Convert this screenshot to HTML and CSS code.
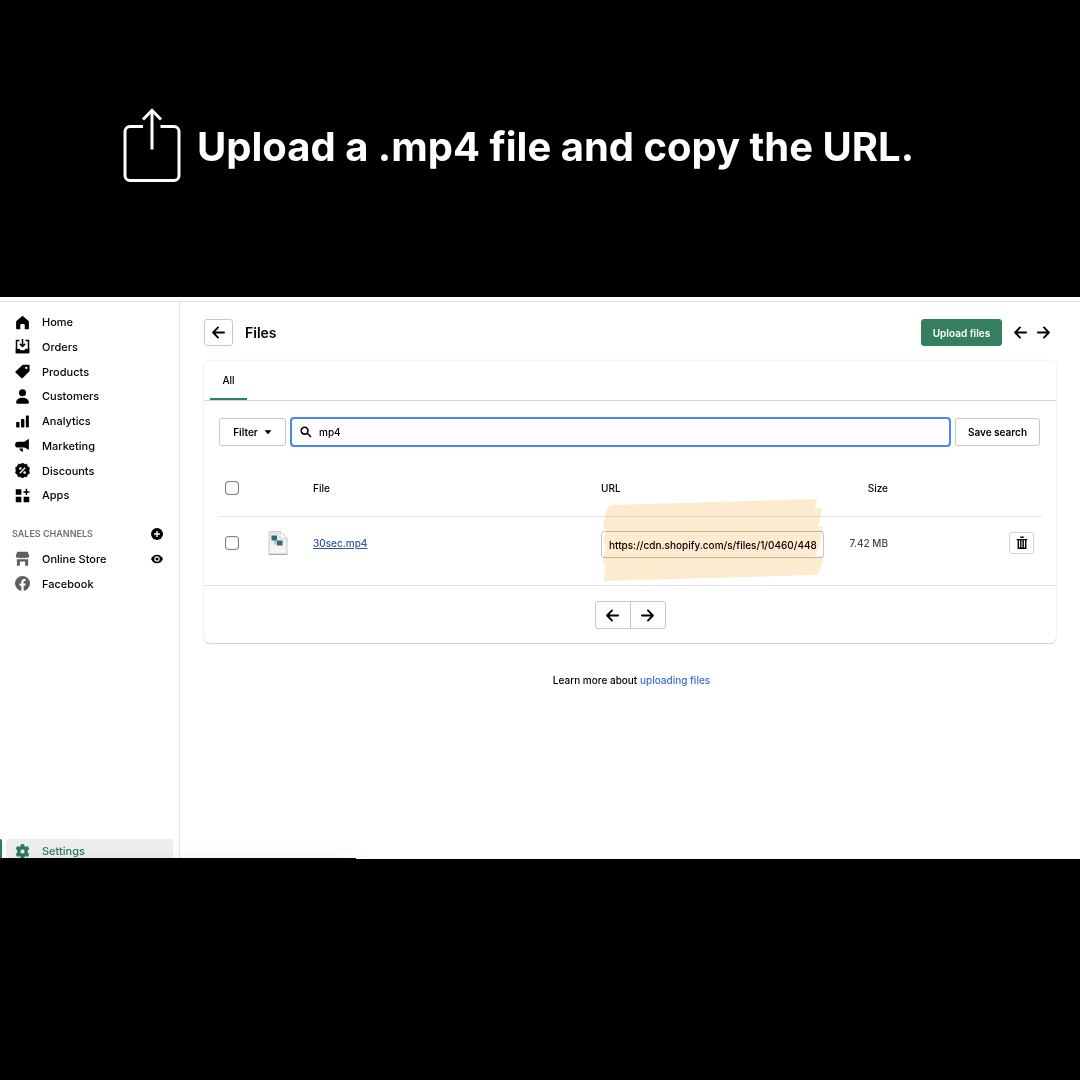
FILE: index.html
```html
<!DOCTYPE html>
<html lang="en">
<head>
<meta charset="utf-8">
<meta name="viewport" content="width=device-width, initial-scale=1">
<title>Files</title>
<link rel="stylesheet" href="styles.css">
</head>
<body>
<svg class="defs" aria-hidden="true">
  <symbol id="arrow-left" viewBox="0 0 14 14"><path d="M6.500 1.500 1.200 7l5.300 5.500M1.500 7H13" fill="none" stroke="currentColor" stroke-width="2" stroke-linecap="round" stroke-linejoin="round"/></symbol>
  <symbol id="arrow-right" viewBox="0 0 14 14"><path d="M7.500 1.500 12.800 7l-5.300 5.500M12.500 7H1" fill="none" stroke="currentColor" stroke-width="2" stroke-linecap="round" stroke-linejoin="round"/></symbol>
</svg>

<header class="banner">
  <svg class="share" viewBox="0 0 58 74" aria-hidden="true"><g fill="none" stroke="#fff" stroke-width="3"><path d="M20 18.500H7A5 5 0 0 0 2 23.500V67.500A5 5 0 0 0 7 72.500H51A5 5 0 0 0 56 67.500V23.500A5 5 0 0 0 51 18.500H37.500M29 41.500V2"/><path d="m20 11.500 9-9.200 9 9.200"/></g></svg>
  <h1 class="banner-title">Upload a .mp4 file and copy the URL.</h1>
</header>

<div class="app">
  <nav class="sidebar" aria-label="Main">
    <ul class="nav-list">
      <li><a class="nav-link" href="#"><svg viewBox="0 0 20 20"><path d="M10 1 1.500 8.200V18a1 1 0 0 0 1 1H7v-5.500a1.500 1.500 0 0 1 1.500-1.500h3a1.500 1.500 0 0 1 1.500 1.500V19h4.500a1 1 0 0 0 1-1V8.200z"/></svg>Home</a></li>
      <li><a class="nav-link" href="#"><svg viewBox="0 0 20 20"><path d="M6 2H2v16h16V2h-4" fill="none" stroke="currentColor" stroke-width="2"/><path d="M1 13h5l1.500 2h5l1.500-2h5v6H1z"/><path d="M10 0v9M6.500 6.500 10 10l3.500-3.500" fill="none" stroke="currentColor" stroke-width="2"/></svg>Orders</a></li>
      <li><a class="nav-link" href="#"><svg viewBox="0 0 20 20"><path fill-rule="evenodd" d="M11 1h7a1.500 1.500 0 0 1 1.500 1.500V8.500a2 2 0 0 1-.6 1.400l-8.500 8.700a1.500 1.500 0 0 1-2.100 0L1 11.700a1.500 1.500 0 0 1 0-2.100l8.600-8a2 2 0 0 1 1.400-.6zM15 3.500a1.600 1.600 0 1 0 0 3.200 1.600 1.600 0 0 0 0-3.200z"/></svg>Products</a></li>
      <li><a class="nav-link" href="#"><svg viewBox="0 0 20 20"><circle cx="10" cy="5" r="4.700"/><path d="M1.500 18c0-4 3.500-6.500 8.500-6.500s8.500 2.500 8.500 6.500c0 1-.6 1.500-1.500 1.500H3c-.9 0-1.500-.5-1.500-1.500z"/></svg>Customers</a></li>
      <li><a class="nav-link" href="#"><svg viewBox="0 0 20 20"><rect x="1.500" y="10.500" width="4.500" height="7.500" rx="1"/><rect x="8" y="6.500" width="4.500" height="11.500" rx="1"/><rect x="14.500" y="2" width="4" height="16" rx="1"/></svg>Analytics</a></li>
      <li><a class="nav-link" href="#"><svg viewBox="0 0 20 20"><path d="M18.500 1v14.500l-6-2.800H4A3.500 3.500 0 0 1 4 5h8.500zM5.500 14h5v4.500L7.500 17z"/></svg>Marketing</a></li>
      <li><a class="nav-link" href="#"><svg viewBox="0 0 20 20"><path d="m10 0 2.500 1.800 3.100-.2 1 2.900 2.600 1.700L18.500 10l.7 3.500-2.600 1.900-1 2.900-3.100-.1L10 20l-2.500-1.800-3.100.1-1-2.900L.8 13.500 1.500 10 .8 6.200l2.600-1.700 1-2.900 3.100.2z" stroke="currentColor" stroke-linejoin="round"/><g fill="#fff"><circle cx="7.200" cy="7.200" r="1.700"/><circle cx="12.800" cy="12.800" r="1.700"/></g><path d="m6.500 13.700 7-7.400" stroke="#fff" stroke-width="1.800"/></svg>Discounts</a></li>
      <li><a class="nav-link" href="#"><svg viewBox="0 0 20 20"><path d="M1 1.500h7.500v7.500H1zM1 11.500h7.500V19H1zM11.500 11.500H19V19h-7.500zM14.200 1h2v3.200h3v2h-3v3h-2v-3h-3v-2h3z"/></svg>Apps</a></li>
    </ul>
    <div class="channels">
      <div class="channel-row"><h2 class="channel-title">SALES CHANNELS</h2>
        <button class="icon-btn" type="button" aria-label="Add sales channel"><svg viewBox="0 0 12 12"><circle cx="6" cy="6" r="6"/><path d="M6 3v6M3 6h6" stroke="#fff" stroke-width="1.400"/></svg></button></div>
      <div class="channel-row"><a class="nav-link" href="#"><svg class="muted" viewBox="0 0 20 20"><path d="M3 1h14l2 5.500a2.800 2.800 0 0 1-4.500 2 3 3 0 0 1-4.500 0 3 3 0 0 1-4.500 0 2.800 2.800 0 0 1-4.500-2zM2.500 11h15v8.500h-4V14h-7v5.500h-4z"/></svg>Online Store</a>
        <button class="icon-btn" type="button" aria-label="View online store"><svg viewBox="0 0 12 12"><path d="M0 6c1.200-2.700 3.300-4.300 6-4.300S10.800 3.300 12 6c-1.200 2.700-3.300 4.300-6 4.300S1.200 8.700 0 6z"/><circle cx="6" cy="6" r="2.700" fill="#fff"/><circle cx="6" cy="6" r="1.500"/></svg></button></div>
      <div class="channel-row"><a class="nav-link" href="#"><svg class="muted" viewBox="0 0 20 20"><circle cx="10" cy="10" r="10"/><path fill="#fff" d="M8.500 20v-7H6v-3h2.500V7.800C8.500 5.300 10 4 12.200 4c1 0 2 .2 2 .2v2.400H13c-1.200 0-1.500.7-1.500 1.500V10h2.700l-.5 3h-2.200v7z"/></svg>Facebook</a></div>
    </div>
    <a class="nav-link settings" href="#" aria-current="page"><svg viewBox="0 0 20 20"><path fill-rule="evenodd" d="M8.300.5h3.400l.6 2.700 1.900 1.100 2.600-.9 1.700 3-2 1.900v3.400l2 1.900-1.700 3-2.600-.9-1.900 1.100-.6 2.700H8.300l-.6-2.700-1.900-1.100-2.600.9-1.700-3 2-1.900V8.300l-2-1.900 1.700-3 2.600.9 1.900-1.100zM10 6.700a3.300 3.300 0 1 0 0 6.600 3.300 3.300 0 0 0 0-6.600z" stroke="currentColor" stroke-linejoin="round"/></svg>Settings</a>
  </nav>

  <main class="main">
    <div class="page-head">
      <button class="btn back" type="button" aria-label="Back"><svg class="arrow"><use href="#arrow-left"/></svg></button>
      <h2 class="page-title">Files</h2>
      <button class="btn primary" type="button">Upload files</button>
      <div class="pager">
        <button class="plain" type="button" aria-label="Previous page"><svg class="arrow"><use href="#arrow-left"/></svg></button>
        <button class="plain" type="button" aria-label="Next page"><svg class="arrow"><use href="#arrow-right"/></svg></button>
      </div>
    </div>

    <section class="card">
      <div class="tabs" role="tablist"><button class="tab" type="button" role="tab" aria-selected="true">All</button></div>
      <div class="filters">
        <button class="btn filter" type="button">Filter <svg class="caret" viewBox="0 0 8 5"><path d="M1.500 .7h5L4 3.800z" stroke="currentColor" stroke-linejoin="round"/></svg></button>
        <label class="search"><svg class="glass" viewBox="0 0 12 12"><path d="M7.300 7.300 11 11M8 4.700a3.400 3.400 0 1 1-6.800 0 3.400 3.400 0 0 1 6.800 0z" fill="none" stroke="currentColor" stroke-width="1.600"/></svg><input type="text" value="mp4" aria-label="Search files"></label>
        <button class="btn save" type="button">Save search</button>
      </div>
      <div class="table-wrap">
        <table class="files">
          <colgroup><col class="c-check"><col class="c-thumb"><col><col class="c-url"><col class="c-size"><col class="c-action"></colgroup>
          <thead>
            <tr><th><input class="check" type="checkbox" aria-label="Select all files"></th><th></th><th>File</th><th>URL</th><th class="num">Size</th><th></th></tr>
          </thead>
          <tbody>
            <tr>
              <td><input class="check" type="checkbox" aria-label="Select 30sec.mp4"></td>
              <td><svg class="thumb" viewBox="0 0 20 24" aria-hidden="true"><defs><linearGradient id="paper" x2="0" y2="1"><stop stop-color="#e4e4e4"/><stop offset="1" stop-color="#f8f8f8"/></linearGradient></defs><path d="M1 .5h11.500l6.500 7v15.500H1z" fill="url(#paper)" stroke="#c9c9c9"/><path d="M.5 23.500h19" stroke="#aaa"/><path d="M12.500.5 12 7l7 .5z" fill="#fff" stroke="#c9c9c9" stroke-width=".7"/><path d="M6 9.500h4v4H6z" fill="#b9c9cb"/><path d="M3.500 4.500h5.500v5H3.500zM9 9.500h5.500v5H9z" fill="#326b75"/></svg></td>
              <td><a class="file-link" href="#">30sec.mp4</a></td>
              <td><div class="url-box"><input type="text" readonly value="https://cdn.shopify.com/s/files/1/0460/4480/files/30sec.mp4" aria-label="File URL"><svg class="marker" viewBox="0 0 222 82" aria-hidden="true"><path fill="#fdebd0" d="M7 7Q8 6 11 6L215 0l-2 10 7-1-3 16-2 3 6-1-2 15-6 16 9-1-4 15q-2 4-4 4L2 82l2-16-3-1v-6l3-12-3-5V42l3-10-3-4 3-15z"/></svg></div></td>
              <td class="num size">7.42 MB</td>
              <td class="num"><button class="trash" type="button" aria-label="Delete 30sec.mp4"><svg viewBox="0 0 12 14"><path d="M.7 3.600h10.600M4.300 1.300h3.400M2.300 4v8.300h7.400V4M4.800 4v8M7.200 4v8" fill="none" stroke="currentColor" stroke-width="1.400"/></svg></button></td>
            </tr>
          </tbody>
        </table>
      </div>
      <div class="pagination">
        <button class="btn first" type="button" aria-label="Previous"><svg class="arrow"><use href="#arrow-left"/></svg></button>
        <button class="btn last" type="button" aria-label="Next"><svg class="arrow"><use href="#arrow-right"/></svg></button>
      </div>
    </section>
    <p class="help">Learn more about <a href="#">uploading files</a></p>
  </main>
  <div class="status-edge"></div>
</div>
</body>
</html>
```

FILE: styles.css
```css
* { box-sizing: border-box; }

body {
  margin: 0;
  min-height: 100vh;
  background: #000;
  color: #000;
  font-family: Inter, "Liberation Sans", sans-serif;
  font-size: 10px;
  line-height: 16px;
}

button, input { font: inherit; color: inherit; }
button { padding: 0; border: 0; background: none; }
h1, h2, p, ul { margin: 0; padding: 0; }
ul { list-style: none; }
a { color: inherit; text-decoration: none; }
svg { display: block; flex: none; fill: currentColor; }
.defs { position: absolute; width: 0; height: 0; }

/* Banner */
.banner {
  display: flex;
  align-items: flex-start;
  gap: 16px;
  padding: 108px 24px 115px 123px;
  color: #fff;
}
.share { width: 58px; height: 74px; }
.banner-title {
  padding-top: 15px;
  font-size: 40px;
  line-height: 48px;
  font-weight: 700;
  white-space: nowrap;
}

/* App shell */
.app {
  position: relative;
  display: flex;
  height: 562px;
  padding-top: 4px;
  overflow: hidden;
  background: #fff;
}
.sidebar {
  display: flex;
  flex-direction: column;
  width: 180px;
  flex: none;
  padding-top: 8px;
  border-top: 1px solid #e3e5e7;
  border-right: 1px solid #e1e5e6;
}
.nav-list {
  display: grid;
  grid-template-rows: repeat(8, 1fr);
  height: 198px;
}
.nav-link {
  display: flex;
  align-items: center;
  gap: 12px;
  height: 24px;
  padding-left: 15px;
  font-size: 11px;
  font-weight: 500;
}
.nav-link svg { width: 15px; height: 15px; }
.muted { color: #5c5f62; }
.channels { margin-top: 13px; }
.channel-row {
  display: flex;
  align-items: center;
  justify-content: space-between;
  height: 25px;
  padding-right: 16px;
}
.channel-title {
  padding-left: 12px;
  color: #6d7175;
  font-size: 9px;
  font-weight: 600;
}
.icon-btn svg { width: 12px; height: 12px; }
.settings {
  position: relative;
  margin: auto 6px -4px;
  padding-left: 9px;
  border-radius: 3px;
  background: #edeeef;
  color: #2c7a5b;
}
.settings::before {
  content: "";
  position: absolute;
  left: -6px;
  width: 2px;
  height: 24px;
  border-radius: 0 3px 3px 0;
  background: #2c7a5b;
}
.status-edge {
  position: absolute;
  left: 0;
  bottom: 0;
  width: 33%;
  height: 1px;
  background: #000;
  box-shadow: 0 0 16px rgba(0, 0, 0, .4);
}

/* Page */
.main {
  flex: 1;
  min-width: 0;
  padding: 17px 24px 0;
  border-top: 1px solid #e3e5e7;
}
.page-head { display: flex; align-items: center; height: 27px; }
.page-title {
  flex: 1;
  padding-left: 12px;
  font-size: 14px;
  font-weight: 600;
}
.btn {
  display: flex;
  align-items: center;
  justify-content: center;
  height: 28px;
  padding: 0 11px;
  border: 1px solid #c4c7ca;
  border-radius: 3px;
  background: #fff;
  font-weight: 600;
}
.back { width: 29px; height: 27px; padding: 0; }
.arrow { width: 13px; height: 13px; }
.primary {
  width: 81px;
  height: 27px;
  padding: 0;
  border-color: #357f61;
  background: #357f61;
  color: #fff;
}
.pager { display: flex; gap: 10px; padding: 0 6px 0 12px; }

.card {
  margin-top: 15px;
  border-radius: 6px;
  box-shadow: 0 0 3px rgba(23, 24, 24, .1), 0 1px 1px rgba(0, 0, 0, .14);
}
.tabs {
  height: 40px;
  padding-left: 6px;
  border-bottom: 1px solid #d5d7d9;
}
.tab {
  width: 37px;
  height: 39px;
  padding-top: 1px;
  border-bottom: 2px solid #2f7f60;
  font-weight: 500;
}
.filters {
  display: flex;
  gap: 5px;
  padding: 17px 16px 0 15px;
}
.filter { width: 67px; gap: 6px; }
.save { width: 85px; padding: 0; }
.caret { width: 8px; height: 5px; }
.search {
  display: flex;
  align-items: center;
  flex: 1;
  gap: 7px;
  padding-left: 8px;
  border: 1px solid #aeb4bb;
  border-radius: 3px;
  outline: 2px solid #4d86ee;
  outline-offset: -1px;
}
.glass { width: 12px; height: 12px; }
.search input {
  flex: 1;
  min-width: 0;
  padding: 0;
  border: 0;
  outline: 0;
  background: none;
  font-weight: 500;
}

.table-wrap { padding: 14px 14px 0; border-bottom: 1px solid #e1e3e5; }
.files { width: 100%; border-collapse: collapse; table-layout: fixed; }
.c-check { width: 43px; }
.c-thumb { width: 44px; }
.c-url { width: 239px; }
.c-size { width: 64px; }
.c-action { width: 146px; }
.files th, .files td { padding: 0 8px; text-align: left; font-weight: 500; }
.files th { height: 56px; border-bottom: 1px solid #e6e8ea; }
.files td { height: 69px; padding-bottom: 16px; }
.files .num { text-align: right; }
.files .size { color: #44474a; }
.files th:nth-child(-n+2), .files td:nth-child(-n+2) { padding-left: 7px; }
.files th:nth-child(2), .files td:nth-child(2) { padding-right: 0; }
.check {
  display: block;
  appearance: none;
  width: 14px;
  height: 14px;
  margin: 0;
  border: 1px solid #7f858a;
  border-radius: 3px;
  box-shadow: inset 0 0 1px #7f858a;
}
.thumb { width: 20px; height: 24px; }
.file-link { color: #2f55a4; text-decoration: underline; }
.url-box { position: relative; padding-top: 4px; }
.url-box input {
  display: block;
  width: 100%;
  height: 27px;
  padding: 0 7px;
  border: 1px solid #c4c7ca;
  border-radius: 3px;
  background: #fff;
}
.marker {
  position: absolute;
  top: -28px;
  left: 1px;
  width: 222px;
  height: 82px;
  mix-blend-mode: multiply;
  pointer-events: none;
}
.trash {
  display: inline-flex;
  align-items: center;
  justify-content: center;
  width: 25px;
  height: 22px;
  border: 1px solid #d2d5d8;
  border-radius: 3px;
  vertical-align: middle;
}
.trash svg { width: 12px; height: 14px; }
.pagination { display: flex; justify-content: center; padding: 15px 0 14px; }
.pagination .btn { width: 36px; padding: 0; }
.first { border-radius: 3px 0 0 3px; }
.last { margin-left: -1px; border-radius: 0 3px 3px 0; }
.help { margin-top: 29px; padding-left: 3px; font-weight: 500; text-align: center; }
.help a { color: #3a6fd0; }
```
